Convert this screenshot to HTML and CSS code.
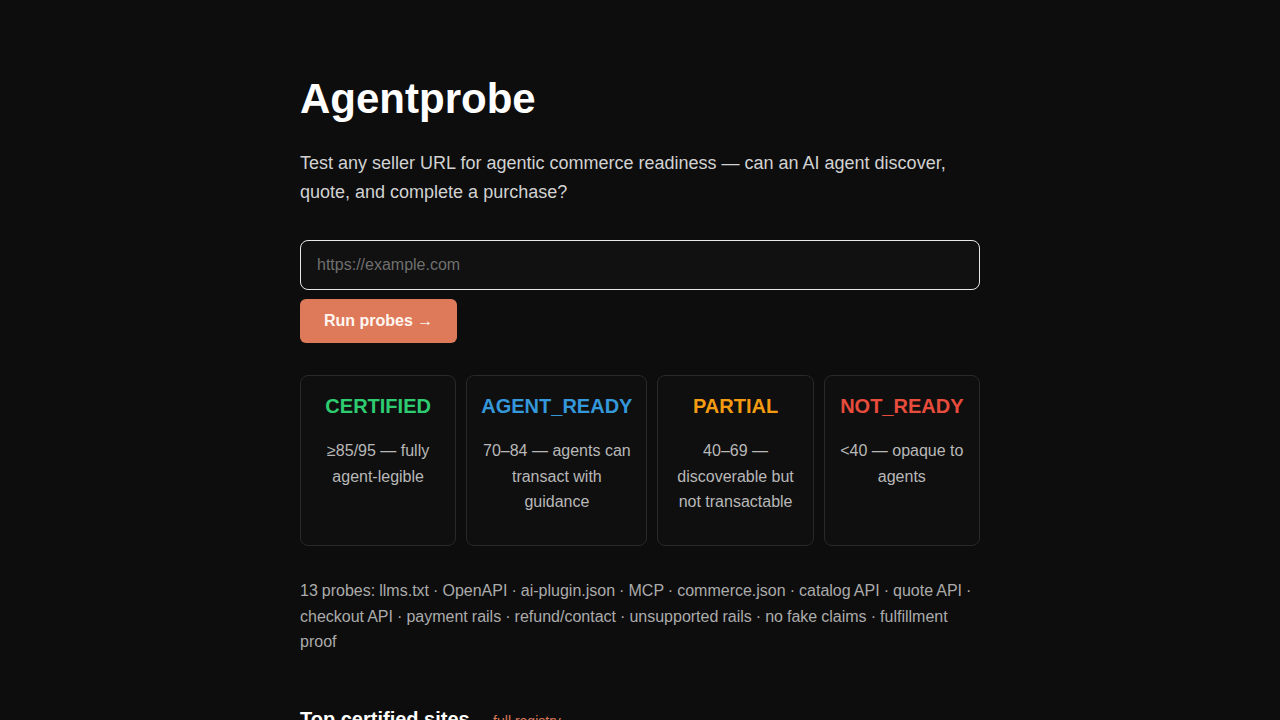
FILE: index.html
```html
<!DOCTYPE html>
<html lang="en">
<head>
<meta charset="utf-8">
<title>Agentprobe</title>
<link rel="stylesheet" href="styles.css">
</head>
<body>
<main class="page">
  <h1 class="title">Agentprobe</h1>
  <p class="lead">Test any seller URL for agentic commerce readiness — can an AI agent discover, quote, and complete a purchase?</p>
  <form class="probe-form">
    <input class="url-input" type="text" placeholder="https://example.com">
    <button class="run-btn" type="button">Run probes →</button>
  </form>
  <div class="tiers">
    <div class="tier">
      <h3 class="tier-name certified">CERTIFIED</h3>
      <p class="tier-desc">≥85/95 — fully agent-legible</p>
    </div>
    <div class="tier">
      <h3 class="tier-name ready">AGENT_READY</h3>
      <p class="tier-desc">70–84 — agents can transact with guidance</p>
    </div>
    <div class="tier">
      <h3 class="tier-name partial">PARTIAL</h3>
      <p class="tier-desc">40–69 — discoverable but not transactable</p>
    </div>
    <div class="tier">
      <h3 class="tier-name notready">NOT_READY</h3>
      <p class="tier-desc">&lt;40 — opaque to agents</p>
    </div>
  </div>
  <p class="probes">13 probes: llms.txt · OpenAPI · ai-plugin.json · MCP · commerce.json · catalog API · quote API · checkout API · payment rails · refund/contact · unsupported rails · no fake claims · fulfillment proof</p>
  <section class="top-sites">
    <h2 class="section-title">Top certified sites <a class="registry-link" href="#">→ full registry</a></h2>
  </section>
</main>
</body>
</html>
```

FILE: styles.css
```css
html, body {
  margin: 0;
  padding: 0;
  background: #0d0d0d;
  color: #e6e6e6;
  font-family: "Liberation Sans", Arial, sans-serif;
}

.page {
  max-width: 680px;
  margin: 0 auto;
  padding: 74px 0 40px;
}

.title {
  margin: 0 0 25px;
  font-size: 42px;
  line-height: 1.2;
  font-weight: 700;
  color: #ffffff;
}

.lead {
  margin: 0 0 33px;
  font-size: 18px;
  line-height: 1.6;
  color: #d2d2d2;
}

.probe-form {
  display: flex;
  flex-direction: column;
  align-items: flex-start;
  gap: 9px;
}

.url-input {
  box-sizing: border-box;
  width: 100%;
  height: 50px;
  padding: 0 16px;
  background: #111111;
  border: 1px solid #e8e8e8;
  border-radius: 8px;
  color: #e6e6e6;
  font-family: inherit;
  font-size: 16px;
  outline: none;
}

.url-input::placeholder {
  color: #6f6f6f;
}

.run-btn {
  height: 44px;
  padding: 0 24px;
  background: #de7a5a;
  color: #fff6f0;
  border: none;
  border-radius: 6px;
  font-family: inherit;
  font-size: 16px;
  font-weight: 700;
  cursor: pointer;
}

.tiers {
  display: flex;
  gap: 10px;
  margin-top: 32px;
}

.tier {
  flex: 1 1 0;
  box-sizing: border-box;
  min-height: 171px;
  padding: 18px 14px;
  background: #0f0f0f;
  border: 1px solid #292929;
  border-radius: 8px;
  text-align: center;
}

.tier-name {
  margin: 0 0 20px;
  font-size: 20px;
  line-height: 1.2;
  font-weight: 700;
  white-space: nowrap;
}

.certified { color: #2ecc71; }
.ready { color: #3498db; }
.partial { color: #f39c12; }
.notready { color: #e74c3c; }

.tier-desc {
  margin: 0;
  font-size: 16px;
  line-height: 1.6;
  color: #b8b8b8;
}

.probes {
  margin: 32px 0 0;
  font-size: 16px;
  line-height: 1.6;
  color: #ababab;
  word-spacing: -0.4px;
}

.top-sites {
  margin-top: 52px;
}

.section-title {
  margin: 0;
  font-size: 20px;
  line-height: 1.2;
  font-weight: 700;
  color: #ffffff;
}

.registry-link {
  margin-left: 0;
  font-size: 14px;
  font-weight: 400;
  color: #d9785a;
  text-decoration: none;
}
```
